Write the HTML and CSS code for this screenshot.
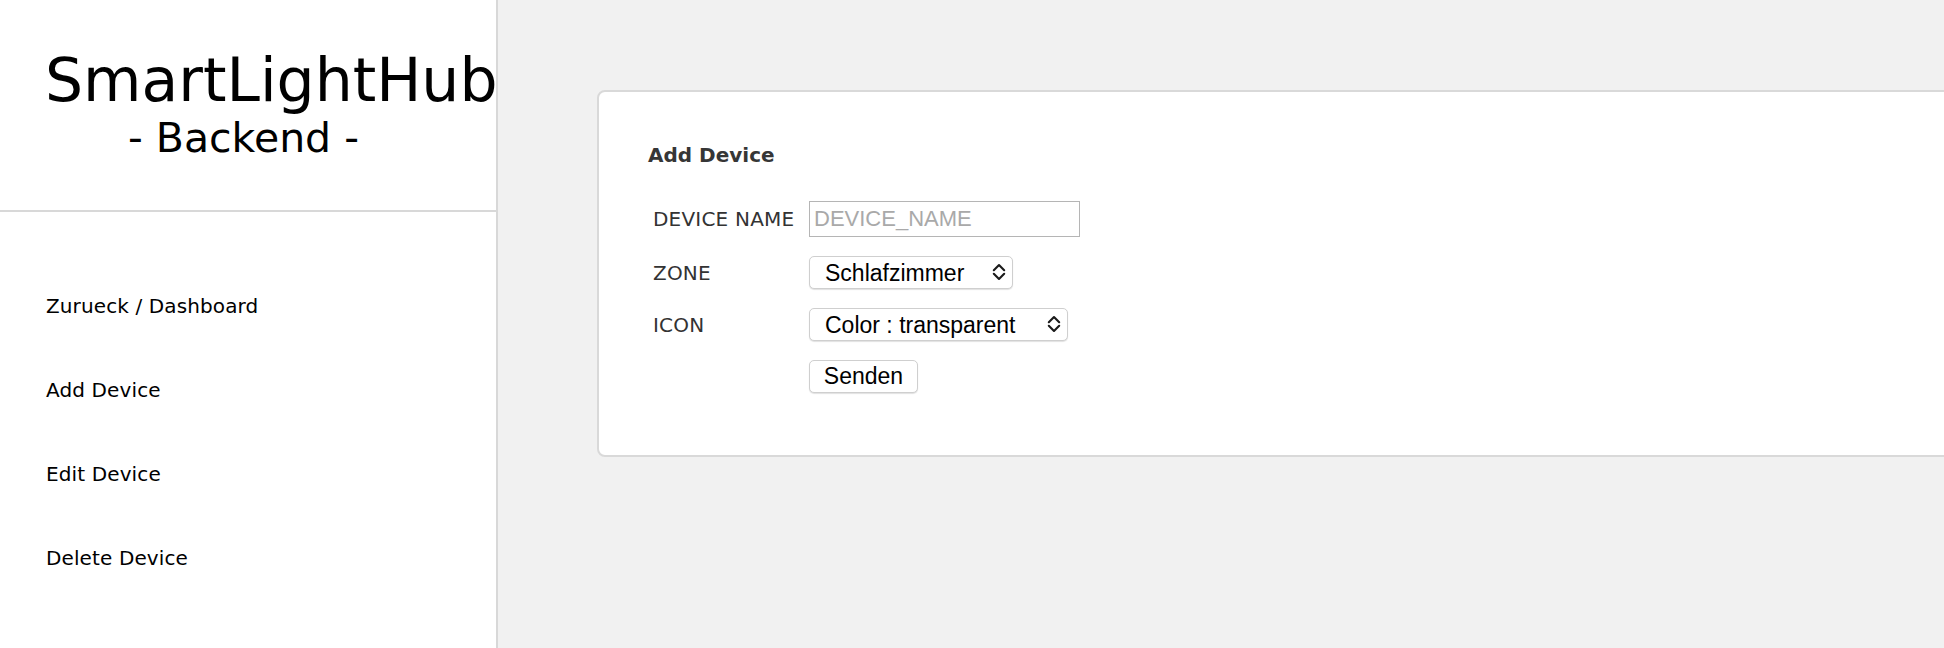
FILE: index.html
```html
<!DOCTYPE html>
<html lang="de">
<head>
<meta charset="utf-8">
<title>SmartLightHub - Backend</title>
<link rel="stylesheet" href="styles.css">
</head>
<body>
<div class="layout">
  <aside class="sidebar">
    <header class="brand">
      <div class="brand-title">SmartLightHub</div>
      <div class="brand-sub">- Backend -</div>
    </header>
    <nav class="nav">
      <a class="nav-item" href="#">Zurueck / Dashboard</a>
      <a class="nav-item" href="#">Add Device</a>
      <a class="nav-item" href="#">Edit Device</a>
      <a class="nav-item" href="#">Delete Device</a>
    </nav>
  </aside>
  <main class="main">
    <section class="card">
      <h2 class="card-title">Add Device</h2>
      <form class="form">
        <label class="form-label" for="name">DEVICE NAME</label>
        <div class="form-field"><input class="text-input" id="name" type="text" placeholder="DEVICE_NAME"></div>
        <label class="form-label" for="zone">ZONE</label>
        <div class="form-field">
          <div class="select-wrap select-zone">
            <select class="select" id="zone"><option>Schlafzimmer</option></select>
            <svg class="select-arrow" width="14" height="18" viewBox="0 0 14 18"><path d="M1.8 7.2 L7 2 L12.2 7.2 M1.8 10.8 L7 16 L12.2 10.8" fill="none" stroke="#1a1a1a" stroke-width="2.1" stroke-linecap="round" stroke-linejoin="round"/></svg>
          </div>
        </div>
        <label class="form-label" for="icon">ICON</label>
        <div class="form-field">
          <div class="select-wrap select-icon">
            <select class="select" id="icon"><option>Color : transparent</option></select>
            <svg class="select-arrow" width="14" height="18" viewBox="0 0 14 18"><path d="M1.8 7.2 L7 2 L12.2 7.2 M1.8 10.8 L7 16 L12.2 10.8" fill="none" stroke="#1a1a1a" stroke-width="2.1" stroke-linecap="round" stroke-linejoin="round"/></svg>
          </div>
        </div>
        <span class="form-label"></span>
        <div class="form-field"><button class="btn" type="button">Senden</button></div>
      </form>
    </section>
  </main>
</div>
</body>
</html>
```
FILE: styles.css
```css
html, body {
  margin: 0;
  padding: 0;
  height: 100%;
  overflow: hidden;
}
body {
  font-family: "DejaVu Sans", Verdana, sans-serif;
  color: #000;
  background: #f1f1f1;
}
.layout {
  display: flex;
  height: 648px;
}
.sidebar {
  width: 496px;
  flex: 0 0 496px;
  background: #fff;
  border-right: 2px solid #d8d8d8;
  overflow: hidden;
}
.brand {
  height: 164px;
  padding-top: 46px;
  border-bottom: 2px solid #d8d8d8;
}
.brand-title {
  font-size: 60px;
  line-height: 68px;
  padding-left: 45px;
  white-space: nowrap;
}
.brand-sub {
  font-size: 41px;
  line-height: 46px;
  padding-left: 128px;
  margin-top: 1px;
}
.nav {
  display: flex;
  flex-direction: column;
  padding-top: 52px;
}
.nav-item {
  display: block;
  padding: 30px 0 30px 46px;
  font-size: 20px;
  line-height: 24px;
  letter-spacing: 0.12px;
  color: #000;
  text-decoration: none;
}
.main {
  flex: 1;
  padding: 90px 0 0 99px;
  overflow: hidden;
}
.card {
  width: 1500px;
  height: 363px;
  box-sizing: content-box;
  background: #fff;
  border: 2px solid #d9d9d9;
  border-radius: 8px;
  padding: 0;
}
.card-title {
  margin: 0;
  padding: 51px 0 0 49px;
  font-size: 20px;
  line-height: 24px;
  font-weight: bold;
  color: #363636;
}
.form {
  display: grid;
  grid-template-columns: 156px auto;
  grid-auto-rows: auto;
  row-gap: 19px;
  align-items: center;
  justify-content: start;
  margin: 34px 0 0 54px;
}
.form-label {
  font-size: 20px;
  line-height: 24px;
  letter-spacing: 0.2px;
  color: #333;
}
.form-field {
  display: flex;
  align-items: center;
}
.text-input {
  width: 271px;
  height: 36px;
  box-sizing: border-box;
  border: 1px solid #b5b5b5;
  border-radius: 0;
  padding: 0 0 0 4px;
  font-family: "Liberation Sans", Arial, sans-serif;
  font-size: 22px;
  color: #000;
  outline: none;
}
.text-input::placeholder {
  color: #a9a9a9;
}
.select-wrap {
  position: relative;
  display: inline-block;
}
.select {
  -webkit-appearance: none;
  appearance: none;
  display: block;
  height: 33px;
  box-sizing: border-box;
  background: #fff;
  border: 1px solid #cfcfcf;
  border-radius: 5px;
  box-shadow: 0 1px 1px rgba(0,0,0,0.12);
  padding: 0 0 0 15px;
  font-family: "Liberation Sans", Arial, sans-serif;
  font-size: 23px;
  color: #000;
  outline: none;
}
.select-zone .select { width: 204px; }
.select-icon .select { width: 259px; }
.select-arrow {
  position: absolute;
  right: 7px;
  top: 7px;
  pointer-events: none;
}
.btn {
  display: block;
  height: 33px;
  width: 109px;
  box-sizing: border-box;
  background: #fff;
  border: 1px solid #cfcfcf;
  border-radius: 5px;
  box-shadow: 0 1px 1px rgba(0,0,0,0.12);
  padding: 0;
  font-family: "Liberation Sans", Arial, sans-serif;
  font-size: 23px;
  color: #000;
}
```
